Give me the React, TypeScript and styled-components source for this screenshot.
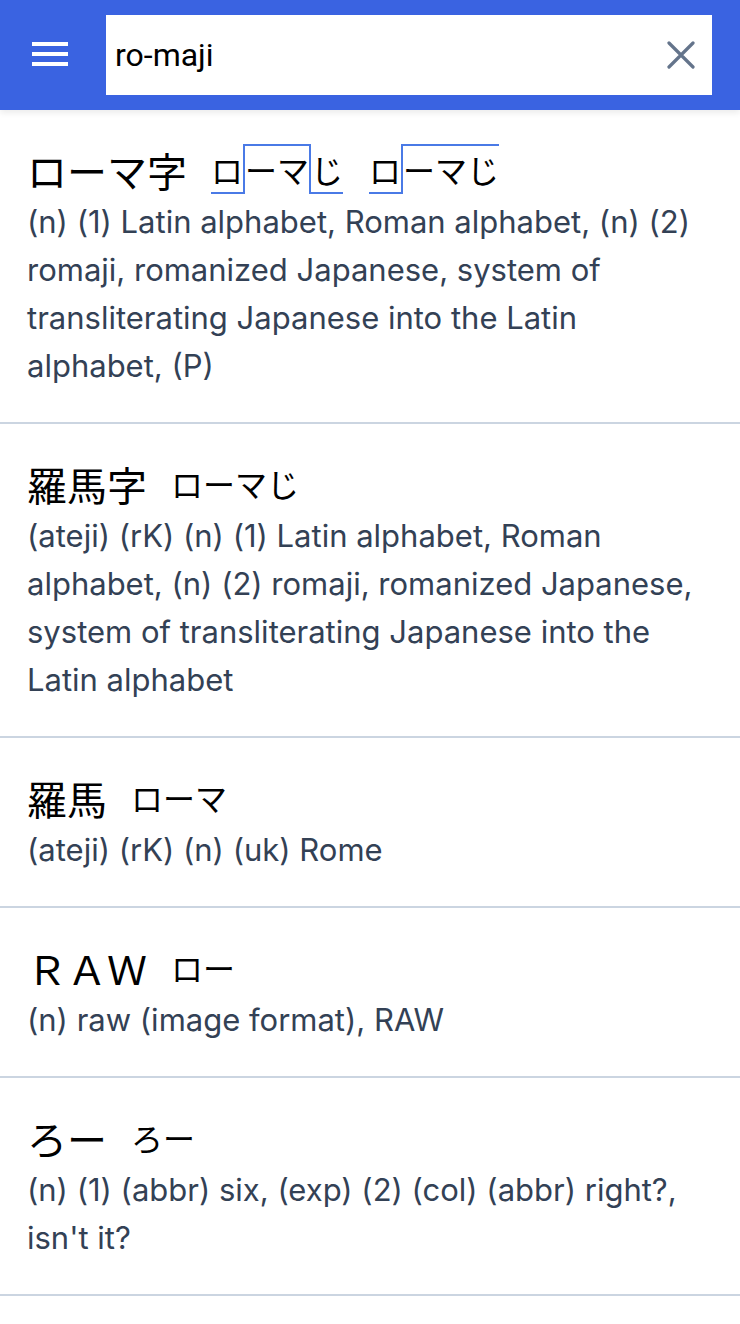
import React from "react";
import styled, { createGlobalStyle } from "styled-components";

const GlobalStyle = createGlobalStyle`
  html, body { margin: 0; padding: 0; background: #ffffff; }
  body { font-family: Inter, "Noto Sans CJK JP", sans-serif; }
  * { box-sizing: border-box; }
`;

const Page = styled.div`
  width: 740px;
  min-height: 1324px;
  background: #ffffff;
`;

const Header = styled.header`
  height: 110px;
  background: #3a63e1;
  display: flex;
  align-items: center;
  padding: 0 28px 0 32px;
  box-shadow: 0 3px 6px rgba(0, 0, 0, 0.08);
  position: relative;
  z-index: 1;
`;

const MenuButton = styled.button`
  width: 36px;
  height: 24px;
  padding: 0;
  margin: -2px 38px 0 0;
  border: none;
  background: transparent;
  display: flex;
  flex-direction: column;
  justify-content: space-between;
  cursor: pointer;
`;

const MenuLine = styled.span`
  display: block;
  width: 36px;
  height: 4px;
  background: #ffffff;
`;

const SearchBox = styled.div`
  flex: 1;
  height: 80px;
  background: #ffffff;
  display: flex;
  align-items: center;
  padding: 0 16px 0 9px;
`;

const SearchInput = styled.div`
  flex: 1;
  font-family: Roboto, "Liberation Sans", sans-serif;
  font-size: 32px;
  color: #000000;
  line-height: 40px;
`;

const ClearButton = styled.button`
  width: 30px;
  height: 30px;
  padding: 0;
  border: none;
  background: transparent;
  display: flex;
  align-items: center;
  justify-content: center;
`;

const List = styled.main`
  display: flex;
  flex-direction: column;
`;

const Entry = styled.article`
  padding: 32px 27px;
  border-bottom: 2px solid #cbd5e1;
`;

const HeadRow = styled.div`
  height: 56px;
  display: flex;
  align-items: center;
  gap: 24px;
`;

const Headword = styled.span`
  font-family: "Noto Sans CJK JP", sans-serif;
  font-size: 40px;
  line-height: 56px;
  color: #000000;
`;

const Readings = styled.span`
  display: flex;
  align-items: center;
  gap: 26px;
  margin-top: -3px;
`;

const Reading = styled.span`
  display: inline-flex;
  font-family: "Noto Sans CJK JP", sans-serif;
  font-size: 32px;
  color: #000000;
`;

const Mora = styled.span<{ $pitch?: "low" | "high"; $rise?: boolean; $drop?: boolean }>`
  display: inline-block;
  line-height: 46px;
  height: 50px;
  border-style: solid;
  border-color: #4a7ae6;
  border-width: ${(p) =>
    p.$pitch === "high"
      ? "2px 0 0 0"
      : p.$pitch === "low"
      ? "0 0 2px 0"
      : "0"};
  border-left-width: ${(p) => (p.$rise ? "2px" : "0")};
  border-right-width: ${(p) => (p.$drop ? "2px" : "0")};
  padding-top: ${(p) => (p.$pitch === "high" ? "0" : "2px")};
`;

const Gloss = styled.p`
  margin: 0;
  font-family: Inter, "Liberation Sans", sans-serif;
  font-size: 31px;
  line-height: 48px;
  color: #334155;
`;

type MoraDef = { t: string; pitch?: "low" | "high"; rise?: boolean; drop?: boolean };

type EntryDef = {
  head: string;
  readings: MoraDef[][];
  gloss: string;
};

const entries: EntryDef[] = [
  {
    head: "ローマ字",
    readings: [
      [
        { t: "ロ", pitch: "low" },
        { t: "ーマ", pitch: "high", rise: true, drop: true },
        { t: "じ", pitch: "low" },
      ],
      [
        { t: "ロ", pitch: "low" },
        { t: "ーマじ", pitch: "high", rise: true },
      ],
    ],
    gloss:
      "(n) (1) Latin alphabet, Roman alphabet, (n) (2) romaji, romanized Japanese, system of transliterating Japanese into the Latin alphabet, (P)",
  },
  {
    head: "羅馬字",
    readings: [[{ t: "ローマじ" }]],
    gloss:
      "(ateji) (rK) (n) (1) Latin alphabet, Roman alphabet, (n) (2) romaji, romanized Japanese, system of transliterating Japanese into the Latin alphabet",
  },
  {
    head: "羅馬",
    readings: [[{ t: "ローマ" }]],
    gloss: "(ateji) (rK) (n) (uk) Rome",
  },
  {
    head: "ＲＡＷ",
    readings: [[{ t: "ロー" }]],
    gloss: "(n) raw (image format), RAW",
  },
  {
    head: "ろー",
    readings: [[{ t: "ろー" }]],
    gloss: "(n) (1) (abbr) six, (exp) (2) (col) (abbr) right?, isn't it?",
  },
];

export default function App() {
  return (
    <Page>
      <GlobalStyle />
      <Header>
        <MenuButton aria-label="menu">
          <MenuLine />
          <MenuLine />
          <MenuLine />
        </MenuButton>
        <SearchBox>
          <SearchInput>ro-maji</SearchInput>
          <ClearButton aria-label="clear">
            <svg width="28" height="28" viewBox="0 0 28 28">
              <path
                d="M2 2 L26 26 M26 2 L2 26"
                stroke="#64748b"
                strokeWidth="3.2"
                strokeLinecap="round"
                fill="none"
              />
            </svg>
          </ClearButton>
        </SearchBox>
      </Header>
      <List>
        {entries.map((e, i) => (
          <Entry key={i}>
            <HeadRow>
              <Headword>{e.head}</Headword>
              <Readings>
                {e.readings.map((r, j) => (
                  <Reading key={j}>
                    {r.map((m, k) => (
                      <Mora key={k} $pitch={m.pitch} $rise={m.rise} $drop={m.drop}>
                        {m.t}
                      </Mora>
                    ))}
                  </Reading>
                ))}
              </Readings>
            </HeadRow>
            <Gloss>{e.gloss}</Gloss>
          </Entry>
        ))}
      </List>
    </Page>
  );
}
